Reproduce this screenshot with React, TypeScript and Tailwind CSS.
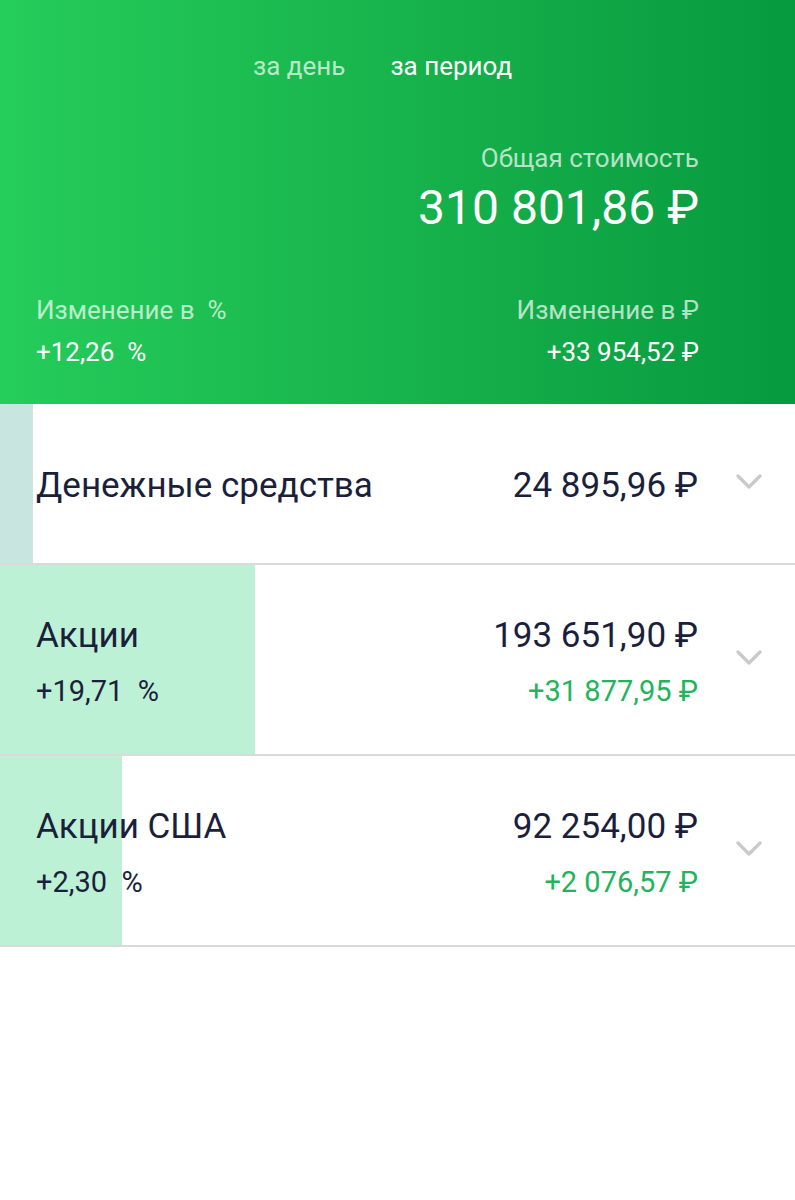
import React from "react";

const Chevron = () => (
  <svg width="26" height="16" viewBox="0 0 26 16" fill="none">
    <path d="M2 2 L13 13 L24 2" stroke="#c9c9c9" strokeWidth="3.2" strokeLinecap="round" strokeLinejoin="round" />
  </svg>
);

type Row = {
  name: string;
  value: string;
  pct?: string;
  change?: string;
  bar: number;
  barColor: string;
  h: string;
};

const rows: Row[] = [
  { name: "Денежные средства", value: "24 895,96 ₽", bar: 33, barColor: "#c8e6df", h: "h-[161px]" },
  { name: "Акции", value: "193 651,90 ₽", pct: "+19,71\u00a0\u00a0%", change: "+31 877,95 ₽", bar: 255, barColor: "#bdf1d6", h: "h-[191px]" },
  { name: "Акции США", value: "92 254,00 ₽", pct: "+2,30\u00a0\u00a0%", change: "+2 076,57 ₽", bar: 122, barColor: "#bdf1d6", h: "h-[191px]" },
];

export default function App() {
  return (
    <div className="w-[795px] min-h-[1200px] bg-white" style={{ fontFamily: "Roboto, 'Noto Sans', sans-serif" }}>
      <div className="h-[404px] bg-gradient-to-r from-[#25cd5a] to-[#069a3f] text-white flex flex-col">
        <div className="flex pl-[253px] gap-[45px] pt-[50px] text-[26px] leading-[32px]">
          <span className="text-white/70">за день</span>
          <span className="text-white">за период</span>
        </div>
        <div className="flex flex-col items-end pr-[96px] mt-[60px]">
          <span className="text-[26px] leading-[32px] text-white/70">Общая стоимость</span>
          <span className="text-[48px] leading-[56px] mt-[6px]">310 801,86 ₽</span>
        </div>
        <div className="flex justify-between pl-[36px] pr-[96px] mt-[58px]">
          <div className="flex flex-col">
            <span className="text-[26px] leading-[32px] text-white/70">Изменение в&nbsp;&nbsp;%</span>
            <span className="text-[26px] leading-[32px] mt-[10px]">+12,26&nbsp;&nbsp;%</span>
          </div>
          <div className="flex flex-col items-end">
            <span className="text-[26px] leading-[32px] text-white/70">Изменение в ₽</span>
            <span className="text-[26px] leading-[32px] mt-[10px]">+33 954,52 ₽</span>
          </div>
        </div>
      </div>
      {rows.map((r) => (
        <div key={r.name} className={`relative ${r.h} border-b-2 border-[#dadada] bg-white`}>
          <div className="absolute left-0 top-0 bottom-0" style={{ width: r.bar, background: r.barColor }} />
          <div className="relative h-full flex items-center pl-[36px] pr-[33px] pt-[5px] text-[#1b1f3b]">
            <div className="flex-1 flex flex-col">
              <span className="text-[35px] leading-[40px]">{r.name}</span>
              {r.pct && <span className="text-[29px] leading-[36px] mt-[17px]">{r.pct}</span>}
            </div>
            <div className="flex flex-col items-end">
              <span className="text-[35px] leading-[40px]">{r.value}</span>
              {r.change && <span className="text-[29px] leading-[36px] mt-[17px] text-[#22b35b]">{r.change}</span>}
            </div>
            <div className="ml-[38px] mt-[-8px]">
              <Chevron />
            </div>
          </div>
        </div>
      ))}
    </div>
  );
}
